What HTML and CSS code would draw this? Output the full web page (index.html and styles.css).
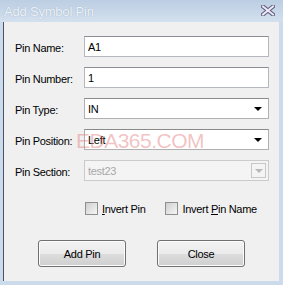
FILE: index.html
```html
<!DOCTYPE html>
<html lang="en">
<head>
  <meta charset="UTF-8">
  <title>Add Symbol Pin</title>
  <link rel="stylesheet" href="styles.css">
</head>
<body>
  <div class="window">
    <div class="title-bar">
      <span class="title">Add Symbol Pin</span>
      <svg class="close-x" width="14" height="11" viewBox="0 0 14 11">
        <path d="M2 1.5 L12 9.5 M12 1.5 L2 9.5" stroke="#5a5878" stroke-width="4" stroke-linecap="square"/>
        <path d="M2 1.5 L12 9.5 M12 1.5 L2 9.5" stroke="#ece6f6" stroke-width="2" stroke-linecap="square"/>
      </svg>
    </div>
    <div class="client">
      <form class="pin-form">
        <label class="field-label" for="pin-name">Pin Name:</label>
        <input class="text-box" type="text" id="pin-name" value="A1">

        <label class="field-label" for="pin-number">Pin Number:</label>
        <input class="text-box" type="text" id="pin-number" value="1">

        <label class="field-label">Pin Type:</label>
        <div class="combo"><span class="combo-value">IN</span><span class="combo-arrow"></span></div>

        <label class="field-label">Pin Position:</label>
        <div class="combo"><span class="combo-value">Left</span><span class="combo-arrow"></span></div>

        <label class="field-label">Pin Section:</label>
        <div class="combo disabled"><span class="combo-value">test23</span><span class="combo-btn"><span class="combo-arrow"></span></span></div>
      </form>

      <div class="check-row">
        <label class="check"><span class="check-box"></span><span><u>I</u>nvert Pin</span></label>
        <label class="check"><span class="check-box"></span><span>Invert <u>P</u>in Name</span></label>
      </div>

      <div class="button-row">
        <button class="win-btn" type="button">Add Pin</button>
        <button class="win-btn" type="button">Close</button>
      </div>

      <div class="watermark">EDA365.COM</div>
    </div>
  </div>
</body>
</html>
```

FILE: styles.css
```css
body {
  margin: 0;
  padding: 0;
  font-family: "Liberation Sans", Arial, sans-serif;
  font-size: 11px;
  letter-spacing: -0.3px;
  color: #000;
}

.window {
  width: 283px;
  height: 285px;
  box-sizing: border-box;
  background-color: #cbdbec;
  padding: 0 4px 4px 3px;
  display: flex;
  flex-direction: column;
}

.title-bar {
  height: 22px;
  flex: none;
  margin: 0 -4px 0 -3px;
  padding: 0 8px 0 4px;
  display: flex;
  align-items: center;
  justify-content: space-between;
  background: linear-gradient(#bccee3, #d3e0ee);
}

.title {
  font-size: 13px;
  color: #eef3f8;
  text-shadow: 0 0 1px #8ea2ba;
  letter-spacing: -0.2px;
}

.close-x {
  margin-top: -1px;
}

.client {
  position: relative;
  flex: 1;
  background-color: #f0f0f0;
  border-left: 1px solid #4a5666;
  padding: 14px 0 0 11px;
}

.pin-form {
  display: grid;
  grid-template-columns: 69px 185px;
  grid-auto-rows: 21px;
  row-gap: 10px;
  align-items: center;
}

.field-label {
  padding-top: 2px;
}

.text-box {
  height: 21px;
  box-sizing: border-box;
  margin: 0;
  padding: 0 3px;
  font-family: inherit;
  font-size: 11px;
  letter-spacing: -0.3px;
  border: 1px solid #b4b8be;
  border-top-color: #8a8d92;
  background-color: #fff;
  outline: none;
}

.combo {
  height: 21px;
  box-sizing: border-box;
  border: 1px solid #b0b0b0;
  border-top-color: #8a8a8a;
  background-color: #fff;
  display: flex;
  align-items: center;
  justify-content: space-between;
  padding: 0 6px 0 3px;
}

.combo-arrow {
  width: 0;
  height: 0;
  border-left: 4px solid transparent;
  border-right: 4px solid transparent;
  border-top: 4px solid #000;
}

.combo.disabled {
  background-color: #f4f4f4;
  border-color: #cbcbcb;
  color: #a8a8a8;
  padding-right: 2px;
}

.combo-btn {
  width: 15px;
  height: 15px;
  box-sizing: border-box;
  border: 1px solid #c8c8c8;
  display: flex;
  align-items: center;
  justify-content: center;
}

.combo.disabled .combo-arrow {
  border-top-color: #b8b8b8;
}

.check-row {
  display: flex;
  gap: 20px;
  margin: 21px 0 0 70px;
}

.check {
  display: flex;
  align-items: center;
  gap: 4px;
}

.check-box {
  width: 11px;
  height: 11px;
  border: 1px solid #8e8f8f;
  background: linear-gradient(135deg, #cfcfcf, #f6f6f6);
}

.button-row {
  display: flex;
  gap: 31px;
  margin: 25px 0 0 23px;
}

.win-btn {
  width: 88px;
  height: 27px;
  font-family: inherit;
  font-size: 11px;
  letter-spacing: -0.3px;
  color: #000;
  border: 1px solid #707070;
  border-radius: 3px;
  background: linear-gradient(#f2f2f2 0%, #ebebeb 50%, #dddddd 51%, #cfcfcf 100%);
  box-shadow: inset 0 0 0 1px #fcfcfc;
  cursor: pointer;
}

.watermark {
  position: absolute;
  left: 72px;
  top: 107px;
  font-size: 21px;
  letter-spacing: -0.5px;
  color: rgba(226, 120, 120, 0.45);
  pointer-events: none;
}
```
